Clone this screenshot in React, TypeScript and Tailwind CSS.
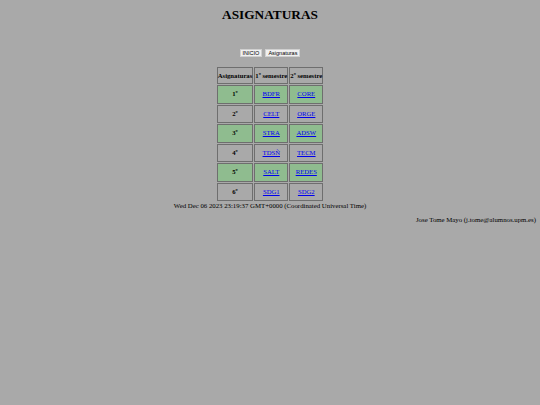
import React from "react";

const rows: { n: string; a: string; b: string; green: boolean }[] = [
  { n: "1º", a: "BDFR", b: "CORE", green: true },
  { n: "2º", a: "CELT", b: "ORGE", green: false },
  { n: "3º", a: "STRA", b: "ADSW", green: true },
  { n: "4º", a: "TDSÑ", b: "TECM", green: false },
  { n: "5º", a: "SALT", b: "REDES", green: true },
  { n: "6º", a: "SDG1", b: "SDG2", green: false },
];

export default function App() {
  return (
    <div className="w-[540px] h-[405px] bg-[#a9a9a9] text-black overflow-hidden" style={{ fontFamily: '"Liberation Serif", "Times New Roman", serif' }}>
      <div className="pt-[7px] text-center font-bold text-[13.3px] leading-[16px]">ASIGNATURAS</div>
      <div className="mt-[26px] flex justify-center gap-[3px]">
        <button className="h-[8px] px-[2px] bg-[#f0f0f0] border border-[#d0d0d0] text-[5.5px] leading-[6px] text-black" style={{ fontFamily: '"Liberation Sans", Arial, sans-serif' }}>INICIO</button>
        <button className="h-[8px] px-[2px] bg-[#f0f0f0] border border-[#d0d0d0] text-[5.5px] leading-[6px] text-black" style={{ fontFamily: '"Liberation Sans", Arial, sans-serif' }}>Asignaturas</button>
      </div>
      <div className="mt-[9px] flex justify-center">
        <table className="border-separate border-spacing-[1px] text-[6.7px] leading-[8px]">
          <thead>
            <tr>
              <th className="h-[17px] w-[35px] border border-[#6e6e6e] font-bold p-0 whitespace-nowrap">Asignaturas</th>
              <th className="h-[17px] w-[33px] border border-[#6e6e6e] font-bold p-0 whitespace-nowrap">1º semestre</th>
              <th className="h-[17px] w-[33px] border border-[#6e6e6e] font-bold p-0 whitespace-nowrap">2º semestre</th>
            </tr>
          </thead>
          <tbody>
            {rows.map((r) => (
              <tr key={r.n}>
                <td className={`h-[18.5px] border border-[#6e6e6e] text-center font-bold p-0 ${r.green ? "bg-[#8fbc8f]" : ""}`}>{r.n}</td>
                <td className={`h-[18.5px] border border-[#6e6e6e] text-center p-0 ${r.green ? "bg-[#8fbc8f]" : ""}`}>
                  <a href="#" className="text-[#0000ee] underline">{r.a}</a>
                </td>
                <td className={`h-[18.5px] border border-[#6e6e6e] text-center p-0 ${r.green ? "bg-[#8fbc8f]" : ""}`}>
                  <a href="#" className="text-[#0000ee] underline">{r.b}</a>
                </td>
              </tr>
            ))}
          </tbody>
        </table>
      </div>
      <div className="text-center text-[6.8px] leading-[8px]">Wed Dec 06 2023 23:19:37 GMT+0000 (Coordinated Universal Time)</div>
      <div className="text-right text-[6.8px] leading-[8px] mt-[6px] pr-[4px]">Jose Tome Mayo (j.tome@alumnos.upm.es)</div>
    </div>
  );
}
